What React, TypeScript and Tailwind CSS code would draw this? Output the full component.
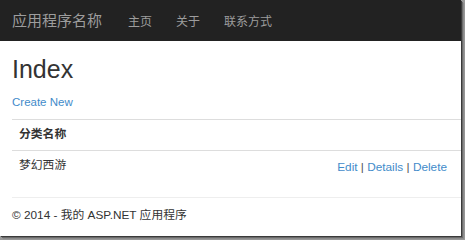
import React from 'react';

const links = ['主页', '关于', '联系方式'];

export default function App() {
  return (
    <div className="w-[465px] h-[240px] bg-[#9a9a9a] overflow-hidden">
      <div
        className="w-[461px] h-[236px] bg-white overflow-hidden shadow-[1px_1px_0_#3a3a3a,2px_2px_0_#6a6a6a,3px_3px_1px_#8a8a8a]"
        style={{ fontFamily: '"Liberation Sans", Arial, "Noto Sans CJK SC", sans-serif' }}
      >
        <nav className="h-[41px] bg-[#222] flex items-center pl-[12px] text-[#9d9d9d]">
          <span className="text-[15px] mr-[14px]" style={{ fontFamily: '"Noto Sans CJK SC", sans-serif' }}>
            应用程序名称
          </span>
          {links.map((l) => (
            <span key={l} className="text-[12px] px-[12px]" style={{ fontFamily: '"Noto Sans CJK SC", sans-serif' }}>
              {l}
            </span>
          ))}
        </nav>

        <div className="pl-[12px] text-[#333]">
          <h2 className="text-[25px] leading-[27px] mt-[15px]">Index</h2>
          <p className="text-[11.5px] leading-[16px] mt-[11px] mb-[9px]">
            <a className="text-[#428bca]">Create New</a>
          </p>

          <table className="w-full text-[11.8px] border-collapse">
            <tbody>
              <tr className="border-t border-[#ddd]">
                <th className="h-[31px] text-left pl-[7px] font-bold">分类名称</th>
                <th />
              </tr>
              <tr className="border-t border-[#ddd]">
                <td className="h-[31px] pl-[7px]">梦幻西游</td>
                <td className="h-[31px] text-right pr-[14px] pt-[3px]">
                  <a className="text-[#428bca]">Edit</a>
                  <span className="text-[#555]"> | </span>
                  <a className="text-[#428bca]">Details</a>
                  <span className="text-[#555]"> | </span>
                  <a className="text-[#428bca]">Delete</a>
                </td>
              </tr>
            </tbody>
          </table>

          <hr className="mt-[15px] border-[#eee]" />
          <footer className="text-[11.8px] leading-[16px] mt-[9px]">© 2014 - 我的 ASP.NET 应用程序</footer>
        </div>
      </div>
    </div>
  );
}
